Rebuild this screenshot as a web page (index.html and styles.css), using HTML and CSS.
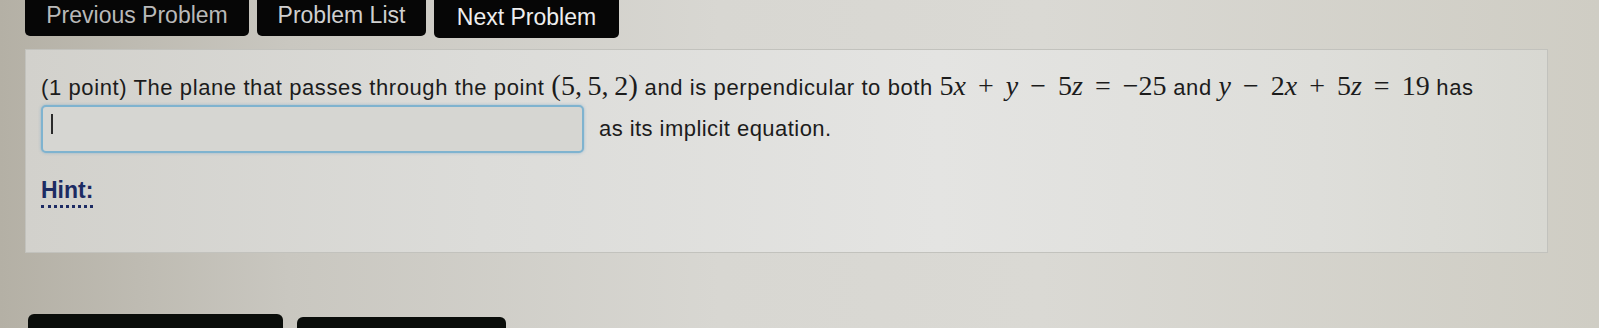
FILE: index.html
```html
<!DOCTYPE html>
<html lang="en">
<head>
    <meta charset="UTF-8">
    <title>Problem</title>
    <link rel="stylesheet" href="styles.css">
</head>
<body>

    <!-- top navigation -->
    <div class="nav">
        <button class="nav-btn prev">Previous Problem</button>
        <button class="nav-btn list">Problem List</button>
        <button class="nav-btn next">Next Problem</button>
    </div>

    <!-- problem body -->
    <div class="problem">
        <div class="line">
            (1 point) The plane that passes through the point
            <span class="m"><span class="paren">(</span>5,&thinsp;5,&thinsp;2<span class="paren">)</span></span>
            and is perpendicular to both
            <span class="m">5<i>x</i><span class="op">+</span><i>y</i><span class="op">&minus;</span>5<i>z</i><span class="op">=</span>&minus;25</span>
            and
            <span class="m"><i>y</i><span class="op">&minus;</span>2<i>x</i><span class="op">+</span>5<i>z</i><span class="op">=</span>19</span>
            has
        </div>
        <div class="answer-row">
            <div class="answer"><span class="caret"></span></div>
            <span>as its implicit equation.</span>
        </div>
        <div class="hint">Hint:</div>
    </div>

    <!-- bottom buttons -->
    <div class="actions">
        <button class="act-btn wide"></button>
        <button class="act-btn"></button>
    </div>

</body>
</html>
```

FILE: styles.css
```css
html, body {
    height: 328px;
    overflow: hidden;
}

body {
    margin: 0;
    font-family: "Liberation Sans", Arial, sans-serif;
    color: #1c1c1c;
    background: linear-gradient(to right, #b4b0a5 0%, #c9c7c0 18%, #d8d7d2 45%, #dad9d4 65%, #cfcdc4 100%);
}

/* nav buttons */
.nav {
    display: flex;
    gap: 8px;
    padding-left: 25px;
}

.nav-btn {
    height: 36px;
    padding: 0 0 6px 0;
    border: none;
    border-radius: 0 0 5px 5px;
    background-color: #060606;
    color: #dcdcdc;
    font-family: "Liberation Sans", Arial, sans-serif;
    font-size: 23px;
}

.prev { width: 224px; color: #b9b9b9; }
.list { width: 169px; color: #d0d0d0; }
.next { width: 185px; color: #eeeeee; height: 38px; padding-bottom: 3px; }

/* problem panel */
.problem {
    margin: 11px 0 0 25px;
    width: 1523px;
    height: 204px;
    box-sizing: border-box;
    padding: 19px 15px 0 15px;
    border: 1px solid #c2c2bd;
    background: linear-gradient(to right, #d2d1cc 0%, #dcdcd9 30%, #e4e4e2 60%, #dededa 85%, #d8d8d2 100%);
}

.line {
    font-size: 22px;
    letter-spacing: 0.6px;
    line-height: 32px;
    white-space: nowrap;
}

.m {
    font-family: "Liberation Serif", "DejaVu Serif", serif;
    font-size: 28px;
    letter-spacing: 0;
}

.m i {
    font-style: italic;
}

.op {
    margin: 0 12px;
}

.paren {
    font-size: 29px;
}

.answer-row {
    display: flex;
    align-items: center;
    gap: 15px;
    margin-top: 1px;
    font-size: 22px;
    letter-spacing: 0.45px;
}

.answer {
    width: 543px;
    height: 48px;
    box-sizing: border-box;
    border: 2px solid #7fb3cf;
    border-radius: 5px;
    background-color: #d6d6d2;
    box-shadow: 0 0 3px rgba(80, 150, 200, 0.5);
    padding: 7px 0 0 8px;
}

.caret {
    display: block;
    width: 2px;
    height: 20px;
    background-color: #2a2a2a;
}

.hint {
    display: inline-block;
    margin-top: 24px;
    font-size: 23px;
    font-weight: bold;
    color: #1d2b63;
    border-bottom: 3px dotted #1d2b63;
    padding-bottom: 1px;
}

/* bottom buttons */
.actions {
    display: flex;
    gap: 14px;
    align-items: flex-start;
    padding-left: 28px;
    margin-top: 61px;
}

.act-btn {
    width: 255px;
    height: 16px;
    border: none;
    border-radius: 6px 6px 0 0;
    background-color: #0a0d0a;
}

.act-btn + .act-btn {
    width: 209px;
    height: 13px;
    margin-top: 3px;
}
```
